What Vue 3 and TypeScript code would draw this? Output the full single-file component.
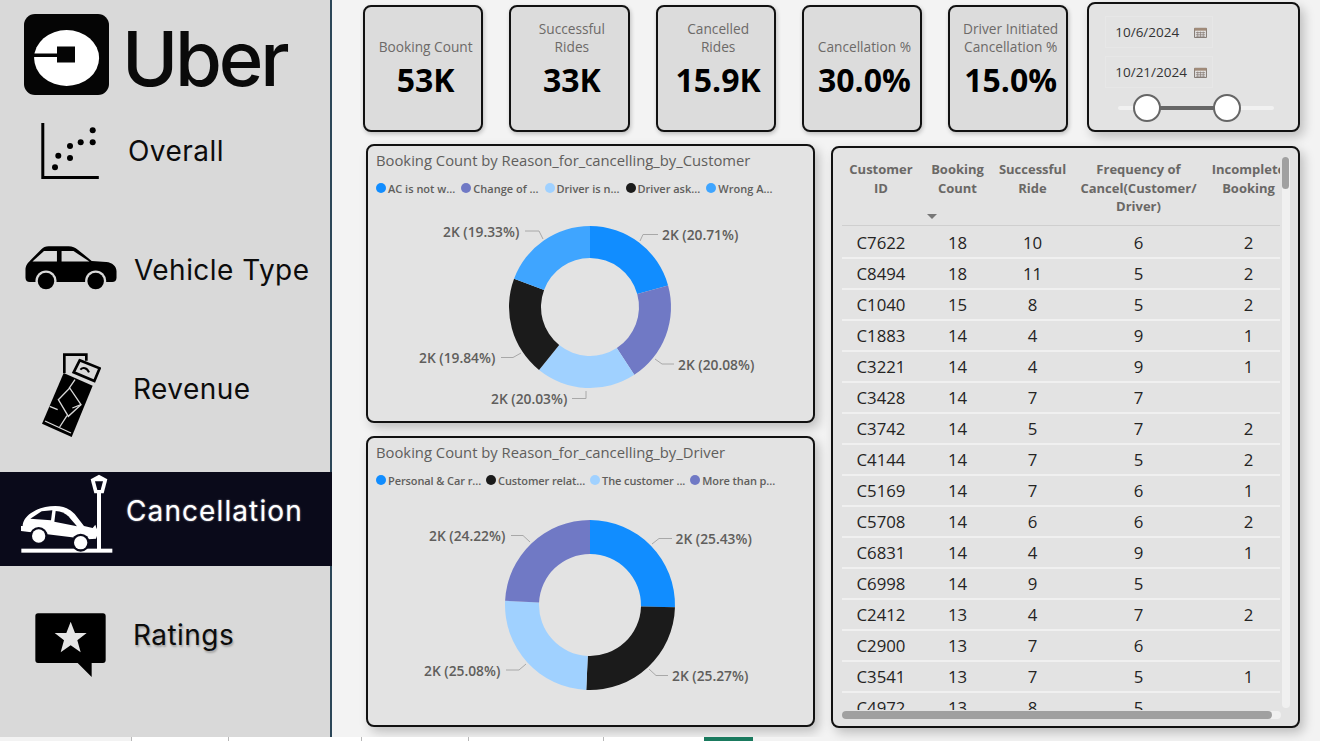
<script setup lang="ts">
/**
 * Uber cancellation dashboard page: nav rail, KPI cards, date slicer,
 * two donut charts and a customer table.
 */
interface Slice {
  value: number
  color: string
  label: string
  textX: number
  textY: number
  line: string
}

interface Donut {
  title: string
  legend: { name: string; color: string }[]
  viewBox: string
  width: number
  height: number
  cx: number
  cy: number
  outer: number
  inner: number
  slices: Slice[]
}

const BLUE = '#118dff'
const INDIGO = '#7079c5'
const PALE = '#a0d1ff'
const DARK = '#1b1b1b'
const SKY = '#3fa5ff'

const kpis = [
  { label: ['Booking Count'], value: '53K' },
  { label: ['Successful', 'Rides'], value: '33K' },
  { label: ['Cancelled', 'Rides'], value: '15.9K' },
  { label: ['Cancellation %'], value: '30.0%' },
  { label: ['Driver Initiated', 'Cancellation %'], value: '15.0%' },
]

const donuts: Donut[] = [
  {
    title: 'Booking Count by Reason_for_cancelling_by_Customer',
    legend: [
      { name: 'AC is not w...', color: BLUE },
      { name: 'Change of ...', color: INDIGO },
      { name: 'Driver is n...', color: PALE },
      { name: 'Driver ask...', color: DARK },
      { name: 'Wrong A...', color: SKY },
    ],
    viewBox: '368 198 444 223',
    width: 444,
    height: 223,
    cx: 590,
    cy: 307,
    outer: 81,
    inner: 49,
    slices: [
      { value: 20.71, color: BLUE, label: '2K (20.71%)', textX: 662, textY: 240, line: '640,241 643,234.5 658,234.5' },
      { value: 20.08, color: INDIGO, label: '2K (20.08%)', textX: 678, textY: 370, line: '655,359 662,364 674,364' },
      { value: 20.03, color: PALE, label: '2K (20.03%)', textX: 491, textY: 404, line: '586,391 586,398.5 572,398.5' },
      { value: 19.84, color: DARK, label: '2K (19.84%)', textX: 419, textY: 363, line: '521,353 513,357.5 501,357.5' },
      { value: 19.33, color: SKY, label: '2K (19.33%)', textX: 443, textY: 237, line: '543,239 539,231 525,231' },
    ],
  },
  {
    title: 'Booking Count by Reason_for_cancelling_by_Driver',
    legend: [
      { name: 'Personal & Car r...', color: BLUE },
      { name: 'Customer relat...', color: DARK },
      { name: 'The customer ...', color: PALE },
      { name: 'More than p...', color: INDIGO },
    ],
    viewBox: '368 490 444 235',
    width: 444,
    height: 235,
    cx: 590,
    cy: 605,
    outer: 85,
    inner: 51,
    slices: [
      { value: 25.43, color: BLUE, label: '2K (25.43%)', textX: 675.5, textY: 544, line: '652,544 659,538.5 672,538.5' },
      { value: 25.27, color: DARK, label: '2K (25.27%)', textX: 672, textY: 681, line: '649,669 656,675.5 668,675.5' },
      { value: 25.08, color: PALE, label: '2K (25.08%)', textX: 424, textY: 676, line: '526,664 519,670 506,670' },
      { value: 24.22, color: INDIGO, label: '2K (24.22%)', textX: 429, textY: 541, line: '530,542 523,535.5 511,535.5' },
    ],
  },
]

function slicePaths(d: Donut): { d: string; color: string }[] {
  const total = d.slices.reduce((sum, s) => sum + s.value, 0)
  let start = -Math.PI / 2
  return d.slices.map((s) => {
    const end = start + (s.value / total) * Math.PI * 2
    const large = end - start > Math.PI ? 1 : 0
    const pt = (r: number, a: number) =>
      `${(d.cx + r * Math.cos(a)).toFixed(2)} ${(d.cy + r * Math.sin(a)).toFixed(2)}`
    const path =
      `M${pt(d.outer, start)} A${d.outer} ${d.outer} 0 ${large} 1 ${pt(d.outer, end)} ` +
      `L${pt(d.inner, end)} A${d.inner} ${d.inner} 0 ${large} 0 ${pt(d.inner, start)} Z`
    start = end
    return { d: path, color: s.color }
  })
}

const rows: [string, number, number, number, number | ''][] = [
  ['C7622', 18, 10, 6, 2],
  ['C8494', 18, 11, 5, 2],
  ['C1040', 15, 8, 5, 2],
  ['C1883', 14, 4, 9, 1],
  ['C3221', 14, 4, 9, 1],
  ['C3428', 14, 7, 7, ''],
  ['C3742', 14, 5, 7, 2],
  ['C4144', 14, 7, 5, 2],
  ['C5169', 14, 7, 6, 1],
  ['C5708', 14, 6, 6, 2],
  ['C6831', 14, 4, 9, 1],
  ['C6998', 14, 9, 5, ''],
  ['C2412', 13, 4, 7, 2],
  ['C2900', 13, 7, 6, ''],
  ['C3541', 13, 7, 5, 1],
  ['C4972', 13, 8, 5, ''],
]
</script>

<template>
  <div class="page">
    <div class="content">
      <aside class="rail">
        <div class="brand">
          <svg class="brand-mark" viewBox="24 14 85 81">
            <rect x="24" y="14" width="85" height="81" rx="11" fill="#050505" />
            <ellipse cx="66.6" cy="58" rx="32.5" ry="28" fill="#fff" />
            <rect x="34" y="53.5" width="24" height="3.5" fill="#050505" />
            <rect x="57" y="46.5" width="18" height="16" fill="#050505" />
          </svg>
          <span class="brand-name">Uber</span>
        </div>

        <div class="nav nav-overall">
          <svg class="ico" width="58" height="56" viewBox="41 124 58 56">
            <path d="M42.8 124v54.5h56" fill="none" stroke="#000" stroke-width="3" />
            <g fill="#000">
              <circle cx="92.7" cy="131.3" r="3" />
              <circle cx="92.7" cy="143.3" r="3" />
              <circle cx="80.7" cy="143.3" r="3" />
              <circle cx="70" cy="147" r="3" />
              <circle cx="58.3" cy="156.7" r="3" />
              <circle cx="70" cy="159" r="3" />
              <circle cx="55" cy="168.3" r="3" />
            </g>
          </svg>
          <span>Overall</span>
        </div>

        <div class="nav nav-vehicle">
          <svg class="ico" width="92" height="48" viewBox="75 730 275 145">
            <path
              d="M75 808c0-14 8-22 18-32l30-30c6-6 12-9 22-9h60c12 0 20 4 28 10l42 34 44 3c18 2 31 12 31 28v20c0 8-5 13-13 13H88c-8 0-13-5-13-13z"
              fill="#000"
            />
            <path d="M96 783l35-32h39v32z" fill="#d9d9d9" />
            <path d="M184 751h36l48 32h-84z" fill="#d9d9d9" />
            <circle cx="137" cy="842" r="32" fill="#d9d9d9" />
            <circle cx="137" cy="842" r="25" fill="#000" />
            <circle cx="287" cy="842" r="32" fill="#d9d9d9" />
            <circle cx="287" cy="842" r="25" fill="#000" />
          </svg>
          <span>Vehicle Type</span>
        </div>

        <div class="nav nav-revenue">
          <svg class="ico" width="60" height="85" viewBox="120 70 180 255">
            <path d="M190 130V75h66v18" fill="none" stroke="#000" stroke-width="8" />
            <path d="M236 92l60 24-16 38-62-26z" fill="none" stroke="#000" stroke-width="8" />
            <path d="M238 120c8-8 20-6 26 8" fill="none" stroke="#000" stroke-width="6" />
            <path d="M188 130l87 38-63 154-89-40z" fill="#000" />
            <path d="M172 210l34-35 34 50-38 35z" fill="#000" stroke="#d9d9d9" stroke-width="4" />
            <path d="M222 150l-18 26M240 225l-26 10M198 258l-22 34M170 240l-24-10" stroke="#d9d9d9" stroke-width="4" />
            <path d="M132 274l78 36" stroke="#d9d9d9" stroke-width="4" />
          </svg>
          <span>Revenue</span>
        </div>

        <div class="nav nav-cancel">
          <svg class="ico" width="92" height="80" viewBox="62 434 276 240">
            <rect x="63" y="658" width="273" height="12" fill="#fff" />
            <rect x="290" y="488" width="12" height="172" fill="#fff" />
            <path d="M271 450l25-14 25 14-11 42h-28z" fill="#fff" />
            <path d="M284 456h24l-7 26h-10z" fill="#0a0a1a" />
            <path
              d="M67 590c0-14 10-28 24-38 22-16 46-22 74-22 26 0 44 10 58 24l28 36 26 6 8-10 4 12 8-6-2 14-8 22-24 2-210-26c-6-6-8-10-8-14z"
              fill="#fff"
            />
            <path d="M90 568l34-22 32-3-4 30z" fill="#0a0a1a" />
            <path d="M166 545c16 1 28 6 38 16l26 30-68-14z" fill="#0a0a1a" />
            <circle cx="115" cy="620" r="27" fill="#0a0a1a" />
            <circle cx="115" cy="620" r="20" fill="#fff" />
            <circle cx="241" cy="640" r="27" fill="#0a0a1a" />
            <circle cx="241" cy="640" r="20" fill="#fff" />
          </svg>
          <span>Cancellation</span>
        </div>

        <div class="nav nav-ratings">
          <svg class="ico" width="71" height="64" viewBox="105 850 213 192">
            <path
              d="M114 851h195c5 0 8 3 8 8v133c0 5-3 8-8 8h-34v42l-42-42H114c-5 0-8-3-8-8V859c0-5 3-8 8-8z"
              fill="#000"
            />
            <path
              d="M212 876l13 34h35l-28 22 10 36-30-21-30 21 10-36-28-22h35z"
              fill="#e4e4e4"
            />
          </svg>
          <span>Ratings</span>
        </div>
      </aside>

      <main class="board">
        <section class="top-row">
          <div class="kpi-row">
            <div v-for="k in kpis" :key="k.value" class="kpi">
              <div class="kpi-label">
                <div v-for="line in k.label" :key="line">{{ line }}</div>
              </div>
              <div class="kpi-value">{{ k.value }}</div>
            </div>
          </div>
          <div class="card slicer">
            <div class="date-input">
              <span>10/6/2024</span>
              <svg width="13" height="11" viewBox="0 0 14 12">
                <path d="M.5 1.5h13v10H.5z" fill="none" stroke="#7a7068" />
                <path d="M.5 1h13v3H.5z" fill="#a08a78" />
                <path d="M2 6h10M2 8h10M2 10h10M4 5v6M7 5v6M10 5v6" stroke="#8a8078" stroke-width=".8" />
              </svg>
            </div>
            <div class="date-input">
              <span>10/21/2024</span>
              <svg width="13" height="11" viewBox="0 0 14 12">
                <path d="M.5 1.5h13v10H.5z" fill="none" stroke="#7a7068" />
                <path d="M.5 1h13v3H.5z" fill="#a08a78" />
                <path d="M2 6h10M2 8h10M2 10h10M4 5v6M7 5v6M10 5v6" stroke="#8a8078" stroke-width=".8" />
              </svg>
            </div>
            <div class="range">
              <div class="range-fill"></div>
              <div class="thumb thumb-a"></div>
              <div class="thumb thumb-b"></div>
            </div>
          </div>
        </section>

        <section class="body-row">
          <div class="charts">
            <div v-for="c in donuts" :key="c.title" class="card chart">
              <div class="chart-title">{{ c.title }}</div>
              <div class="legend">
                <span v-for="item in c.legend" :key="item.name" class="legend-item">
                  <i class="legend-dot" :style="{ background: item.color }"></i>{{ item.name }}
                </span>
              </div>
              <svg class="donut" :width="c.width" :height="c.height" :viewBox="c.viewBox">
                <path v-for="p in slicePaths(c)" :key="p.color" :d="p.d" :fill="p.color" />
                <g v-for="s in c.slices" :key="s.label">
                  <polyline :points="s.line" fill="none" stroke="#a8a8a8" stroke-width="1" />
                  <text :x="s.textX" :y="s.textY" class="donut-label">{{ s.label }}</text>
                </g>
              </svg>
            </div>
          </div>

          <div class="card table-card">
            <div class="table-wrap">
              <div class="t-row t-head">
                <div>Customer<br />ID</div>
                <div class="sorted">Booking<br />Count<i class="caret"></i></div>
                <div>Successful<br />Ride</div>
                <div>Frequency of<br />Cancel(Customer/<br />Driver)</div>
                <div>Incomplete<br />Booking</div>
              </div>
              <div v-for="r in rows" :key="r[0]" class="t-row t-data">
                <div v-for="(cell, i) in r" :key="i">{{ cell }}</div>
              </div>
            </div>
            <div class="v-scroll"><div class="v-thumb"></div></div>
            <div class="h-scroll"><div class="h-thumb"></div></div>
          </div>
        </section>
      </main>
    </div>

    <footer class="tabs">
      <div class="tab tab-a"></div>
      <div class="tab tab-b"></div>
      <div class="tab tab-c"></div>
      <div class="tab tab-d"></div>
      <div class="tab tab-e"></div>
      <div class="tab tab-f"></div>
      <div class="tab tab-on"></div>
      <div class="tab tab-rest"></div>
    </footer>
  </div>
</template>

<style>
html,
body {
  margin: 0;
  background: #f3f3f3;
  overflow: hidden;
}
</style>

<style scoped>
.page {
  width: 1320px;
  height: 741px;
  display: flex;
  flex-direction: column;
  font-family: "Open Sans", "Noto Sans", sans-serif;
  color: #605e5c;
}
.content {
  flex: 1;
  display: flex;
  min-height: 0;
}

/* nav rail */
.rail {
  width: 330px;
  box-sizing: content-box;
  background: #d9d9d9;
  border-right: 2px solid #2b4658;
  flex: none;
  font-family: Inter, "Open Sans", sans-serif;
  color: #0c0c0c;
}
.brand {
  height: 81px;
  padding: 14px 0 0 24px;
  display: flex;
  gap: 13px;
}
.brand-mark {
  width: 85px;
  height: 81px;
  flex: none;
}
.brand-name {
  font-size: 76px;
  line-height: 88px;
  font-weight: 500;
  letter-spacing: -3.2px;
  color: #0a0a0a;
}
.nav {
  height: 94px;
  display: flex;
  align-items: center;
  font-size: 28px;
  letter-spacing: 0.45px;
}
.ico {
  flex: none;
}
.nav-overall {
  margin-top: 9px;
  padding-left: 41px;
  gap: 29px;
}
.nav-vehicle {
  margin-top: 25px;
  padding-left: 25px;
  gap: 17px;
}
.nav-vehicle .ico {
  margin-top: -5px;
}
.nav-revenue {
  margin-top: 25px;
  padding-left: 41px;
  gap: 32px;
}
.nav-revenue .ico {
  margin-top: 13px;
}
.nav-cancel {
  margin-top: 36px;
  margin-right: -2px;
  padding-left: 21px;
  gap: 13px;
  background: #0a0a1a;
  color: #fff;
  letter-spacing: 1.1px;
  text-shadow: 0 0 2px rgba(255, 255, 255, 0.6);
}
.nav-cancel .ico {
  margin-top: -10px;
}
.nav-cancel span {
  margin-top: -16px;
}
.nav-ratings {
  margin-top: 22px;
  padding-left: 35px;
  gap: 27px;
  text-shadow: 1px 2px 2px rgba(0, 0, 0, 0.25);
}
.nav-ratings .ico {
  margin-top: 20px;
}

/* board */
.board {
  flex: 1;
  padding: 2px 20px 0 31px;
  min-width: 0;
}
.card {
  box-sizing: border-box;
  background: #e3e3e3;
  border: 2px solid #111;
  border-radius: 8px;
  box-shadow: 4px 5px 11px rgba(0, 0, 0, 0.22);
}
.top-row {
  display: flex;
  height: 130px;
}
.kpi-row {
  display: flex;
  gap: 26px;
  padding-top: 3px;
}
.kpi {
  box-sizing: border-box;
  width: 120.25px;
  height: 127px;
  padding-left: 5px;
  background: #dcdcdc;
  border: 2px solid #111;
  border-radius: 8px;
  box-shadow: 1px 2px 4px rgba(0, 0, 0, 0.22);
  display: flex;
  flex-direction: column;
  align-items: center;
  text-align: center;
}
.kpi-label {
  height: 49px;
  display: flex;
  flex-direction: column;
  justify-content: flex-end;
  font-size: 13.7px;
  line-height: 18px;
  color: #6d6a68;
  white-space: nowrap;
}
.kpi-value {
  font-size: 32px;
  line-height: 42px;
  margin-top: 3px;
  font-weight: 700;
  color: #000;
}
.slicer {
  width: 213px;
  height: 130px;
  margin-left: 19px;
  padding: 12px 16px;
}
.date-input {
  box-sizing: border-box;
  width: 108px;
  height: 32px;
  margin-bottom: 8px;
  border: 1px solid #e7e7e7;
  padding: 0 5px 0 9px;
  display: flex;
  align-items: center;
  justify-content: space-between;
  font-size: 13.5px;
  color: #333;
}
.range {
  position: relative;
  height: 4px;
  margin: 18px 0 0 13px;
  width: 156px;
  background: #f1f1f1;
  border-radius: 2px;
}
.range-fill {
  position: absolute;
  left: 29px;
  width: 79px;
  top: 0;
  bottom: 0;
  background: #666;
}
.thumb {
  position: absolute;
  top: -12px;
  width: 28px;
  height: 28px;
  box-sizing: border-box;
  border-radius: 50%;
  background: #fff;
  border: 2px solid #666;
}
.thumb-a {
  left: 15px;
}
.thumb-b {
  left: 94.5px;
}
.body-row {
  display: flex;
  margin-top: 12px;
  padding-left: 3px;
}
.charts {
  width: 449px;
  display: flex;
  flex-direction: column;
  gap: 13px;
  flex: none;
}
.chart {
  height: 279px;
  display: flex;
  flex-direction: column;
}
.chart + .chart {
  height: 291px;
}
.chart-title {
  font-size: 14.8px;
  line-height: 20px;
  padding: 4px 0 0 8px;
  white-space: nowrap;
}
.legend {
  display: flex;
  gap: 6px;
  height: 20px;
  margin-top: 8px;
  padding-left: 8px;
  align-items: center;
  font-size: 11px;
  font-weight: 600;
  white-space: nowrap;
}
.chart + .chart .legend {
  gap: 5px;
  letter-spacing: -0.1px;
}
.legend-item {
  display: inline-flex;
  align-items: center;
  gap: 2px;
}
.legend-dot {
  width: 10px;
  height: 10px;
  border-radius: 50%;
}
.donut {
  display: block;
  flex: none;
}
.donut-label {
  font-size: 13.8px;
  font-weight: 600;
  fill: #605e5c;
}

/* table */
.table-card {
  position: relative;
  width: 469px;
  height: 582px;
  margin: 2px 0 0 16px;
  flex: none;
}
.table-wrap {
  position: absolute;
  left: 9px;
  top: 7px;
  width: 438px;
  height: 555px;
  overflow: hidden;
}
.t-row {
  display: grid;
  grid-template-columns: 78px 75px 75px 137px 83px;
  width: 448px;
  text-align: center;
}
.t-head {
  height: 71px;
  margin-bottom: 2px;
  padding-top: 5px;
  box-sizing: border-box;
  font-size: 13px;
  line-height: 18.5px;
  font-weight: 700;
  color: #6a6866;
  border-bottom: 1px solid #cfcfcf;
  white-space: nowrap;
}
.sorted {
  position: relative;
}
.caret {
  position: absolute;
  left: 7px;
  top: 54px;
  border: 5px solid transparent;
  border-top: 5px solid #777;
  border-bottom: 0;
}
.t-data {
  height: 31px;
  box-sizing: border-box;
  align-items: center;
  border-bottom: 2.5px solid #f0f0f0;
  font-size: 16.8px;
  color: #252423;
}
.v-scroll {
  position: absolute;
  left: 449px;
  top: 9px;
  width: 8px;
  height: 551px;
  border-radius: 4px;
  background: #f0f0f0;
}
.v-thumb {
  height: 32px;
  width: 7px;
  border-radius: 4px;
  background: #a0a0a0;
}
.h-scroll {
  position: absolute;
  left: 9px;
  top: 563px;
  width: 439px;
  height: 8px;
  border-radius: 4px;
  background: #f0f0f0;
}
.h-thumb {
  width: 430px;
  height: 8px;
  border-radius: 4px;
  background: #a0a0a0;
}

/* bottom strip */
.tabs {
  height: 4px;
  display: flex;
  flex: none;
  background: #f3f3f3;
}
.tab {
  box-sizing: border-box;
  background: #fff;
  border-right: 1px solid #b8b8b8;
}
.tab-a {
  width: 132px;
  background: #f3f3f3;
}
.tab-b {
  width: 97px;
}
.tab-c {
  width: 133px;
}
.tab-d {
  width: 107px;
}
.tab-e {
  width: 135px;
}
.tab-f {
  width: 100px;
  border-right: 0;
}
.tab-on {
  width: 49px;
  background: #1a7a5e;
  border-right: 0;
}
.tab-rest {
  flex: 1;
  background: #f3f3f3;
  border-right: 0;
}
</style>
